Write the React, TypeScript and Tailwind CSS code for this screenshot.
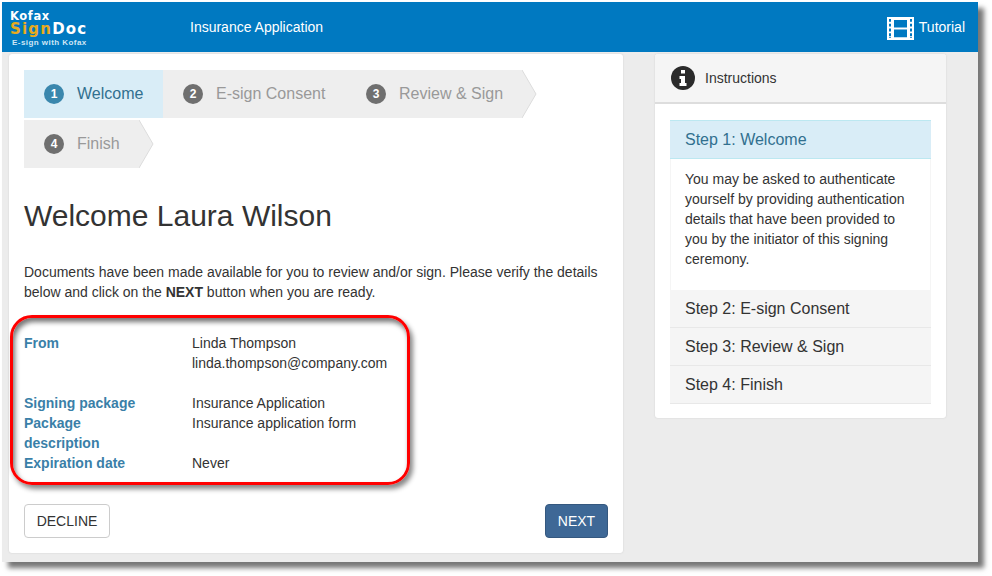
import React from 'react';

const steps = [
  { n: 1, label: 'Welcome', w: 'w-[139px]', active: true },
  { n: 2, label: 'E-sign Consent', w: 'w-[183px]' },
  { n: 3, label: 'Review & Sign', w: 'w-[176px]' },
];

const details = [
  { label: ['From'], value: ['Linda Thompson', 'linda.thompson@company.com', '\u00a0'] },
  { label: ['Signing package'], value: ['Insurance Application'] },
  { label: ['Package', 'description'], value: ['Insurance application form'] },
  { label: ['Expiration date'], value: ['Never'] },
];

const others = ['Step 2: E-sign Consent', 'Step 3: Review & Sign', 'Step 4: Finish'];

const Arrow: React.FC = () => (
  <svg width="15" height="48" viewBox="0 0 15 48" className="shrink-0">
    <polygon points="0,0 14,24 0,48" fill="#eeeeee" />
    <polyline points="0,0 14,24 0,48" fill="none" stroke="#dcdcdc" />
  </svg>
);

const FilmIcon: React.FC = () => (
  <svg width="27" height="23" viewBox="0 0 27 24" preserveAspectRatio="none" className="shrink-0 mt-[3px]">
    <path
      fill="#ffffff"
      fillRule="evenodd"
      d="M0 0H27V24H0ZM2 2V5H4V2ZM2 7V10H4V7ZM2 12V15H4V12ZM2 17V20H4V17ZM2 21V22H4V21ZM23 2V5H25V2ZM23 7V10H25V7ZM23 12V15H25V12ZM23 17V20H25V17ZM23 21V22H25V21ZM7 3V11H20V3ZM7 13V21H20V13Z"
    />
  </svg>
);

const InfoIcon: React.FC = () => (
  <svg width="24" height="24" viewBox="0 0 24 24" className="shrink-0">
    <circle cx="12" cy="12" r="12" fill="#2b2b2b" />
    <path fill="#ffffff" d="M10 4H14V7.5H10ZM8.5 10H14V17H15.5V20H8.5V17H10V13H8.5Z" />
  </svg>
);

const Step: React.FC<{ n: number; label: string; w: string; active?: boolean }> = ({ n, label, w, active }) => (
  <div className={`${w} h-12 flex items-center pl-5 ${active ? 'bg-[#d9edf7] text-[#31708f]' : 'bg-[#eeeeee] text-[#999999]'}`}>
    <span className={`w-5 h-5 rounded-full flex items-center justify-center text-xs font-bold text-white ${active ? 'bg-[#3a87ad]' : 'bg-[#6f6f6f]'}`}>{n}</span>
    <span className="ml-[13px] text-base">{label}</span>
  </div>
);

const Logo: React.FC = () => (
  <div className="w-[180px] pl-2 pt-[4px] text-white font-['DejaVu_Sans',sans-serif] font-bold">
    <div className="text-[11.5px] leading-[11px] tracking-[0.6px]">Kofax</div>
    <div className="text-[15px] leading-[14px] tracking-[1.2px]">
      <span className="text-[#e8ab1e]">Sign</span>Doc
    </div>
    <div className="mt-[3px] text-[8px] leading-[8px] tracking-[0.45px] text-[#cfe6f5] pl-[2px] font-['Liberation_Sans',sans-serif]">E-sign with Kofax</div>
  </div>
);

export default function App() {
  return (
    <div className="w-[992px] h-[576px] bg-white pt-[2px] pl-[2px] overflow-hidden font-['Liberation_Sans',Arial,sans-serif] text-sm leading-5 text-[#333333]">
      <div className="w-[976px] h-[560px] bg-[#ececec] shadow-[6px_6px_5px_#777777]">
        <header className="h-[50px] bg-[#0079c1] flex items-center text-white">
          <Logo />
          <div className="ml-[8px] text-sm">Insurance Application</div>
          <div className="ml-auto mr-[13px] flex items-center">
            <FilmIcon />
            <span className="ml-[5px]">Tutorial</span>
          </div>
        </header>

        <div className="flex items-start pt-[2px] pl-[7px]">
          <main className="w-[614px] h-[499px] bg-white rounded-[3px] shadow-[0_0_2px_#cccccc] pt-4 px-[15px]">
            <div className="flex items-center">
              {steps.map(s => <Step key={s.n} {...s} />)}
              <Arrow />
            </div>
            <div className="flex items-center mt-[2px]">
              <Step n={4} label="Finish" w="w-[115px]" />
              <Arrow />
            </div>

            <h1 className="mt-[28px] text-[30px] leading-[40px]">Welcome Laura Wilson</h1>
            <p className="mt-[26px] w-[584px]">
              Documents have been made available for you to review and/or sign. Please verify the details below and click on the <b>NEXT</b> button when you are ready.
            </p>

            <div className="relative mt-[31px]">
              <div className="absolute left-[-14px] top-[-18px] w-[400px] h-[170px] border-[3px] border-[#ff0000] rounded-[22px] shadow-[3px_4px_5px_#888888,inset_2px_4px_5px_#777777]" />
              {details.map(d => (
                <div key={d.label[0]} className="flex">
                  <div className="w-[168px] font-bold text-[#3a7fa8]">
                    {d.label.map(t => <div key={t}>{t}</div>)}
                  </div>
                  <div>
                    {d.value.map(t => <div key={t}>{t}</div>)}
                  </div>
                </div>
              ))}
            </div>

            <div className="mt-[31px] flex justify-between">
              <button className="w-[86px] h-[34px] bg-white border border-[#cccccc] rounded-[4px]">DECLINE</button>
              <button className="w-[63px] h-[34px] bg-[#3e6896] border border-[#35587f] rounded-[4px] text-white">NEXT</button>
            </div>
          </main>

          <aside className="ml-[32px] w-[291px] h-[364px] bg-white rounded-[3px] shadow-[0_0_2px_#cccccc]">
            <div className="h-[50px] bg-[#f5f5f5] border-b-2 border-[#dddddd] rounded-t-[3px] flex items-center pl-4">
              <InfoIcon />
              <span className="ml-[10px]">Instructions</span>
            </div>
            <div className="pt-4 px-[15px]">
              <div className="h-[39px] bg-[#d9edf7] border-y border-[#bce8f1] text-[#31708f] text-base flex items-center pl-[15px]">Step 1: Welcome</div>
              <div className="h-[131px] pt-[10px] pl-[14px] pr-4 border-x border-[#f5f5f5]">
                You may be asked to authenticate yourself by providing authentication details that have been provided to you by the initiator of this signing ceremony.
              </div>
              {others.map(t => (
                <div key={t} className="h-[38px] bg-[#f5f5f5] border-b border-[#e8e8e8] text-base flex items-center pl-[15px]">{t}</div>
              ))}
            </div>
          </aside>
        </div>
      </div>
    </div>
  );
}
